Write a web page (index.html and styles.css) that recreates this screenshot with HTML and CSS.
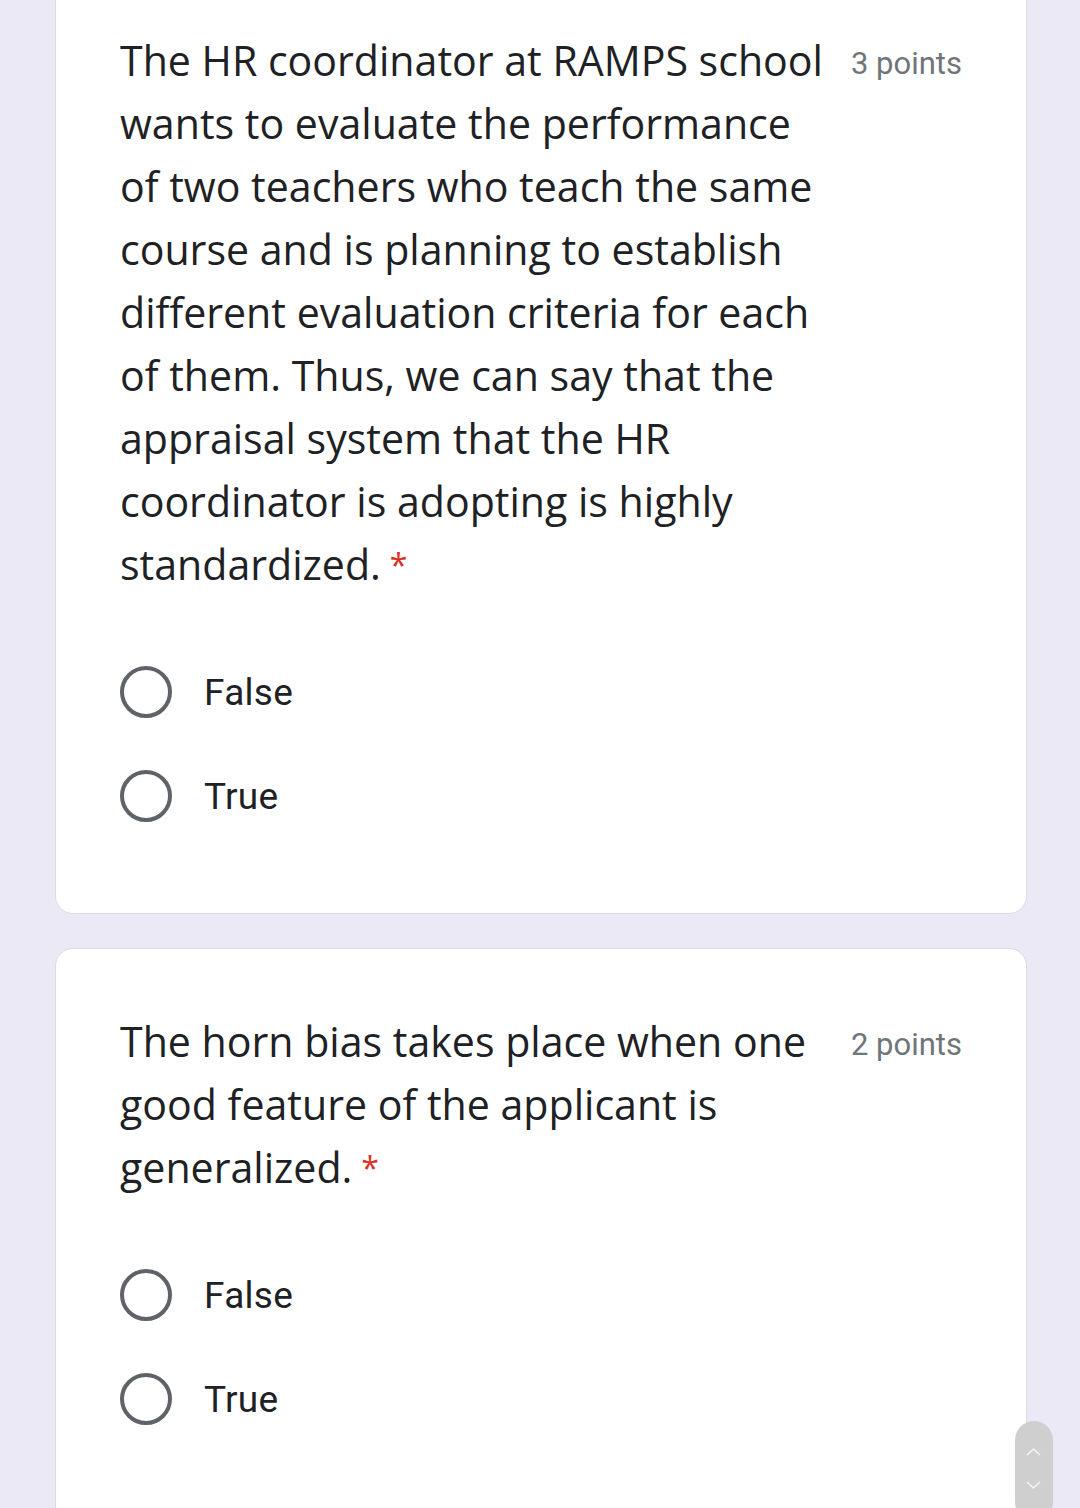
FILE: index.html
```html
<!DOCTYPE html>
<html>
<head>
<meta charset="utf-8">
<link rel="stylesheet" href="styles.css">
</head>
<body>
<main class="form">
  <section class="card card-first">
    <div class="q-head">
      <div class="q-text">The HR coordinator at RAMPS school wants to evaluate the performance of two teachers who teach the same course and is planning to establish different evaluation criteria for each of them. Thus, we can say that the appraisal system that the HR coordinator is adopting is highly standardized.<span class="req">*</span></div>
      <div class="points">3 points</div>
    </div>
    <div class="options">
      <label class="opt"><span class="radio"></span><span class="opt-label">False</span></label>
      <label class="opt"><span class="radio"></span><span class="opt-label">True</span></label>
    </div>
  </section>
  <section class="card card-second">
    <div class="q-head">
      <div class="q-text">The horn bias takes place when one good feature of the applicant is generalized.<span class="req">*</span></div>
      <div class="points">2 points</div>
    </div>
    <div class="options">
      <label class="opt"><span class="radio"></span><span class="opt-label">False</span></label>
      <label class="opt"><span class="radio"></span><span class="opt-label">True</span></label>
    </div>
  </section>
</main>
<div class="scroller">
  <svg width="38" height="87" viewBox="0 0 38 87">
    <path d="M12 34 L18.5 28 L25 34" fill="none" stroke="#f4f4f4" stroke-width="1.6"/>
    <path d="M12 61 L18.5 67 L25 61" fill="none" stroke="#f4f4f4" stroke-width="1.6"/>
  </svg>
</div>
</body>
</html>
```
FILE: styles.css
```css
html, body {
  margin: 0;
  padding: 0;
}
body {
  background: #ebe9f6;
  width: 1080px;
  height: 1508px;
  overflow: hidden;
  position: relative;
}
.form {
  display: flex;
  flex-direction: column;
  gap: 34px;
  padding: 0 53px 0 55px;
}
.card {
  background: #fff;
  border: 1px solid #dadce0;
  border-radius: 18px;
  padding: 0 64px;
}
.card-first {
  margin-top: -40px;
  padding-top: 68px;
  padding-bottom: 65px;
}
.card-second {
  padding-top: 61px;
  height: 560px;
}
.q-head {
  display: flex;
  align-items: flex-start;
  justify-content: space-between;
}
.q-text {
  flex: none;
  width: 712px;
  font-family: "Open Sans", sans-serif;
  font-size: 41.1px;
  line-height: 63px;
  color: #202124;
}
.req {
  color: #d93025;
  margin-left: 9px;
  font-size: 32px;
  vertical-align: top;
}
.points {
  flex: none;
  font-family: Roboto, sans-serif;
  font-size: 31px;
  color: #70757a;
  line-height: 63px;
  padding-top: 3px;
}
.options {
  display: flex;
  flex-direction: column;
  margin-top: 44px;
}
.opt {
  display: flex;
  align-items: center;
  height: 104px;
}
.radio {
  width: 44px;
  height: 44px;
  border: 4px solid #5f6368;
  border-radius: 50%;
  flex: none;
  margin-right: 32px;
}
.opt-label {
  font-family: Roboto, sans-serif;
  font-size: 37px;
  color: #202124;
  letter-spacing: 0.3px;
}
.scroller {
  position: absolute;
  left: 1015px;
  top: 1421px;
  width: 38px;
  height: 100px;
  background: #cfcfcf;
  border-radius: 19px;
}
.scroller svg {
  display: block;
}
```
